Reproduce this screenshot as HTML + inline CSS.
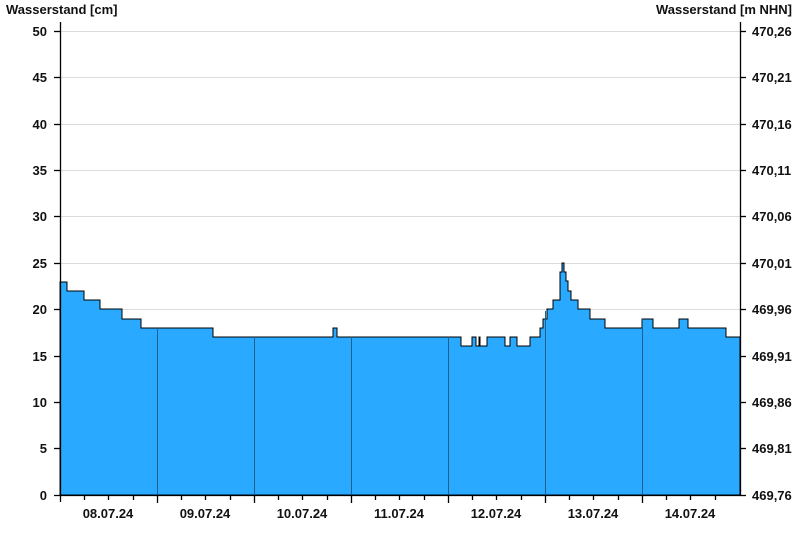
<!DOCTYPE html>
<html><head><meta charset="utf-8"><style>
body{margin:0;background:#fff;width:800px;height:550px;overflow:hidden}
svg text{font-family:"Liberation Sans",Arial,sans-serif;font-size:13px;font-weight:bold;fill:#111}
</style></head><body>
<svg width="800" height="550" xmlns="http://www.w3.org/2000/svg">
<g stroke="#dcdcdc" stroke-width="1">
<line x1="60" x2="740" y1="31.5" y2="31.5"/><line x1="60" x2="740" y1="77.5" y2="77.5"/>
<line x1="60" x2="740" y1="124.5" y2="124.5"/><line x1="60" x2="740" y1="170.5" y2="170.5"/>
<line x1="60" x2="740" y1="216.5" y2="216.5"/><line x1="60" x2="740" y1="263.5" y2="263.5"/>
<line x1="60" x2="740" y1="309.5" y2="309.5"/><line x1="60" x2="740" y1="356.5" y2="356.5"/>
<line x1="60" x2="740" y1="402.5" y2="402.5"/><line x1="60" x2="740" y1="448.5" y2="448.5"/>
</g>
<path fill="#29a9ff" stroke="#000" stroke-width="1" d="M60,495 L60,282 H67 V291 H84 V300 H100 V309 H122 V319 H141 V328 H213 V337 H333 V328 H337 V337 H461 V346 H472 V337 H476 V346 H479 V337 H480 V346 H487 V337 H505 V346 H510 V337 H517 V346 H530 V337 H540 V328 H543 V319 H547 V309 H553 V300 H560 V272 H562 V263 H564 V272 H566 V281 H568 V291 H571 V300 H578 V309 H590 V319 H605 V328 H613 H642 V319 H653 V328 H679 V319 H688 V328 H726 V337 H740 V495 Z"/>
<g stroke="#1f5f8a" stroke-width="1"><line x1="157.5" x2="157.5" y1="328" y2="495"/><line x1="254.5" x2="254.5" y1="337" y2="495"/><line x1="351.5" x2="351.5" y1="337" y2="495"/><line x1="448.5" x2="448.5" y1="337" y2="495"/><line x1="545.5" x2="545.5" y1="311" y2="495"/><line x1="642.5" x2="642.5" y1="319" y2="495"/></g>
<g stroke="#000" stroke-width="1.3">
<line x1="60.5" x2="60.5" y1="22" y2="502"/><line x1="740.5" x2="740.5" y1="22" y2="495"/>
<line x1="54" x2="740" y1="495.5" y2="495.5"/>
<line x1="54" x2="60" y1="31.5" y2="31.5"/><line x1="54" x2="60" y1="77.5" y2="77.5"/><line x1="54" x2="60" y1="124.5" y2="124.5"/><line x1="54" x2="60" y1="170.5" y2="170.5"/><line x1="54" x2="60" y1="216.5" y2="216.5"/><line x1="54" x2="60" y1="263.5" y2="263.5"/><line x1="54" x2="60" y1="309.5" y2="309.5"/><line x1="54" x2="60" y1="356.5" y2="356.5"/><line x1="54" x2="60" y1="402.5" y2="402.5"/><line x1="54" x2="60" y1="448.5" y2="448.5"/>
<line x1="740" x2="746" y1="31.5" y2="31.5"/><line x1="740" x2="746" y1="77.5" y2="77.5"/><line x1="740" x2="746" y1="124.5" y2="124.5"/><line x1="740" x2="746" y1="170.5" y2="170.5"/><line x1="740" x2="746" y1="216.5" y2="216.5"/><line x1="740" x2="746" y1="263.5" y2="263.5"/><line x1="740" x2="746" y1="309.5" y2="309.5"/><line x1="740" x2="746" y1="356.5" y2="356.5"/><line x1="740" x2="746" y1="402.5" y2="402.5"/><line x1="740" x2="746" y1="448.5" y2="448.5"/><line x1="740" x2="746" y1="495.5" y2="495.5"/>
<path d="M157.5,495v8M254.5,495v8M351.5,495v8M448.5,495v8M545.5,495v8M642.5,495v8M84.5,495v5M108.5,495v5M133.5,495v5M181.5,495v5M205.5,495v5M230.5,495v5M278.5,495v5M302.5,495v5M327.5,495v5M375.5,495v5M399.5,495v5M424.5,495v5M472.5,495v5M496.5,495v5M521.5,495v5M569.5,495v5M593.5,495v5M618.5,495v5M666.5,495v5M690.5,495v5M715.5,495v5"/>
</g>
<text x="6" y="14">Wasserstand [cm]</text>
<text x="792" y="14" text-anchor="end">Wasserstand [m NHN]</text>
<g text-anchor="end"><text x="47" y="36">50</text><text x="47" y="82">45</text><text x="47" y="129">40</text><text x="47" y="175">35</text><text x="47" y="221">30</text><text x="47" y="268">25</text><text x="47" y="314">20</text><text x="47" y="361">15</text><text x="47" y="407">10</text><text x="47" y="453">5</text><text x="47" y="500">0</text></g>
<g><text x="752" y="36">470,26</text><text x="752" y="82">470,21</text><text x="752" y="129">470,16</text><text x="752" y="175">470,11</text><text x="752" y="221">470,06</text><text x="752" y="268">470,01</text><text x="752" y="314">469,96</text><text x="752" y="361">469,91</text><text x="752" y="407">469,86</text><text x="752" y="453">469,81</text><text x="752" y="500">469,76</text></g>
<g text-anchor="middle"><text x="108" y="518">08.07.24</text><text x="205" y="518">09.07.24</text><text x="302" y="518">10.07.24</text><text x="399" y="518">11.07.24</text><text x="496" y="518">12.07.24</text><text x="593" y="518">13.07.24</text><text x="690" y="518">14.07.24</text></g>
</svg>
</body></html>
